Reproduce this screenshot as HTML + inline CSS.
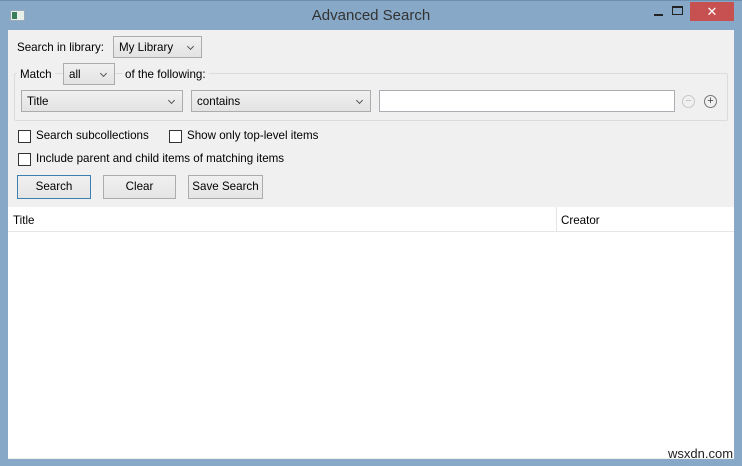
<!DOCTYPE html><html><head><style>
body{margin:0;width:742px;height:466px;background:#87a8c6;font-family:"Liberation Sans",sans-serif;font-size:11.6px;color:#000;position:relative;overflow:hidden}
div{position:absolute;box-sizing:border-box}
.sel{background:linear-gradient(#f0f0f0,#e3e3e3);border:1px solid #acacac;padding:4px 5px;height:22px}
.sel:after{content:"";position:absolute;right:8px;top:7px;width:4px;height:4px;border-right:1.5px solid #555;border-bottom:1.5px solid #555;transform:rotate(45deg)}
.btn{background:linear-gradient(#f0f0f0,#e5e5e5);border:1px solid #acacac;height:24px;text-align:center;line-height:22px}
.cb{width:13px;height:13px;border:1px solid #333;background:#fff}
.t{white-space:nowrap}
</style></head><body>
<div style="left:0;top:0;width:742px;height:30px;border-top:1px solid #6d8eae"></div>
<div style="left:10px;top:10px;width:15px;height:11px;background:#e8eee8;border:1px solid #9ab"><div style="left:1px;top:1px;width:5px;height:7px;background:#3a7d5a"></div></div>
<div class="t" style="left:0;width:742px;top:7px;text-align:center;font-size:15px;color:#333">Advanced Search</div>
<div style="left:654px;top:14px;width:9px;height:2px;background:#222"></div>
<div style="left:672px;top:6px;width:11px;height:9px;border:1px solid #222;border-top-width:2px"></div>
<div style="left:690px;top:2px;width:44px;height:19px;background:#c75050;color:#fff;text-align:center;font-size:13px;line-height:19px">✕</div>
<div style="left:8px;top:30px;width:726px;height:429px;background:#f0f0f0"></div>
<div class="t" style="left:17px;top:41px">Search in library:</div>
<div class="sel" style="left:113px;top:36px;width:89px">My Library</div>
<div style="left:14px;top:73px;width:714px;height:48px;border:1px solid #dcdcdc;border-radius:2px"></div>
<div class="t" style="left:17px;top:68px;background:#f0f0f0;padding:0 3px">Match</div>
<div class="sel" style="left:63px;top:63px;width:52px">all</div>
<div class="t" style="left:122px;top:68px;background:#f0f0f0;padding:0 3px 0 3px">of the following:</div>
<div class="sel" style="left:21px;top:90px;width:162px">Title</div>
<div class="sel" style="left:191px;top:90px;width:180px">contains</div>
<div style="left:379px;top:90px;width:296px;height:22px;background:#fff;border:1px solid #abadb3"></div>
<div style="left:682px;top:95px;width:13px;height:13px;border:1px solid #c8c8c8;border-radius:50%;color:#bbb;text-align:center;line-height:11px;font-size:11px">−</div>
<div style="left:704px;top:95px;width:13px;height:13px;border:1px solid #777;border-radius:50%;color:#444;text-align:center;line-height:11px;font-size:11px">+</div>
<div class="cb" style="left:18px;top:130px"></div><div class="t" style="left:36px;top:129px">Search subcollections</div>
<div class="cb" style="left:169px;top:130px"></div><div class="t" style="left:187px;top:129px">Show only top-level items</div>
<div class="cb" style="left:18px;top:153px"></div><div class="t" style="left:36px;top:152px">Include parent and child items of matching items</div>
<div class="btn" style="left:17px;top:175px;width:74px;border-color:#3c7fb1">Search</div>
<div class="btn" style="left:103px;top:175px;width:73px">Clear</div>
<div class="btn" style="left:188px;top:175px;width:75px">Save Search</div>
<div style="left:8px;top:207px;width:726px;height:251px;background:#fff"></div>
<div style="left:8px;top:231px;width:726px;height:1px;background:#e5e5e5"></div>
<div style="left:556px;top:207px;width:1px;height:24px;background:#e5e5e5"></div>
<div class="t" style="left:13px;top:214px">Title</div>
<div class="t" style="left:561px;top:214px">Creator</div>
<div class="t" style="left:668px;top:446px;font-size:13px;color:#222">wsxdn.com</div>
</body></html>
